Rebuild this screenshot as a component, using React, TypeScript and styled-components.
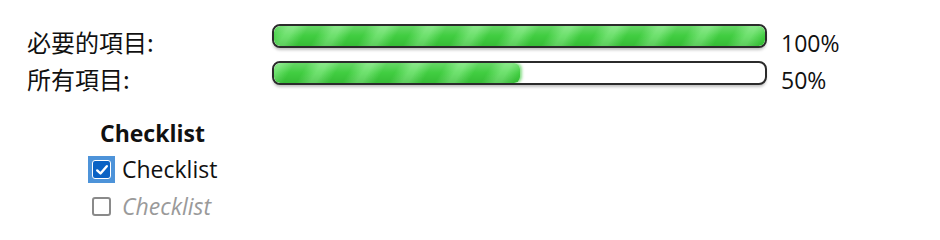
import React from 'react'
import styled, { createGlobalStyle } from 'styled-components'

const GlobalStyle = createGlobalStyle`
    body{
        margin:0;
        background:#fff;
        font-family:"Open Sans","Noto Sans CJK TC",sans-serif;
        color:#111;
    }
`

interface Progress{
    label:string
    value:number
}

const progress:Progress[] = [
    {label:'必要的項目:', value:100},
    {label:'所有項目:', value:50},
]

const Page = styled.div`
    padding:24px 0px 0px 27px;
    width:940px;
    height:240px;
    box-sizing:border-box;
`

const ProgressTable = styled.div`
    display:grid;
    grid-template-columns:245px 495px auto;
    grid-auto-rows:37px;
    align-items:start;
`

const Label = styled.div`
    font-size:24px;
    line-height:30px;
    padding-top:3px;
    font-family:"Noto Sans CJK TC","Open Sans",sans-serif;
    white-space:nowrap;
`

const Track = styled.div`
    position:relative;
    height:24px;
    box-sizing:border-box;
    border:2px solid #2b2b2b;
    border-radius:8px;
    background:#fff;
    overflow:hidden;
    box-shadow:0px 3px 3px -1px rgba(0,0,0,0.25);
`

const Fill = styled.div`
    height:100%;
    border-radius:6px;
    background:
        linear-gradient(180deg, rgba(255,255,255,0.2) 0%, rgba(255,255,255,0) 50%, rgba(0,90,0,0.15) 100%),
        repeating-linear-gradient(-60deg, #40cd40 0px, #40cd40 5px, #6de16d 17px, #6de16d 22px, #40cd40 34px, #40cd40 40px);
    box-shadow:2px 0px 3px rgba(60,200,60,0.6);
`

const Percent = styled.div`
    font-size:23px;
    line-height:30px;
    padding:4px 0px 0px 14px;
`

const Checklist = styled.div`
    display:flex;
    flex-direction:column;
    margin:20px 0px 0px 61px;
    gap:6px;
`

const Heading = styled.div`
    font-size:23px;
    font-weight:700;
    line-height:30px;
    padding-left:12px;
`

const Item = styled.label`
    display:flex;
    align-items:center;
    gap:7px;
    font-size:23px;
    line-height:31px;
`

const Box = styled.span<{checked?:boolean}>`
    display:flex;
    align-items:center;
    justify-content:center;
    width:27px;
    height:27px;
    box-sizing:border-box;
    background:${props=>props.checked ? '#4d93d9' : 'transparent'};
`

const Square = styled.span<{checked?:boolean}>`
    display:flex;
    align-items:center;
    justify-content:center;
    width:19px;
    height:19px;
    box-sizing:border-box;
    border-radius:3px;
    border:${props=>props.checked ? '1px solid #fff' : '2px solid #8a8a8a'};
    background:${props=>props.checked ? '#0a62c4' : '#fff'};
`

const ItemText = styled.span<{muted?:boolean}>`
    color:${props=>props.muted ? '#9a9a9a' : '#111'};
    font-style:${props=>props.muted ? 'italic' : 'normal'};
`

const Check = () => (
    <svg width="14" height="14" viewBox="0 0 14 14">
        <path d="M2.2 7.4 L5.5 10.5 L11.8 3.2" fill="none" stroke="#fff" strokeWidth="2.4" strokeLinecap="round" strokeLinejoin="round"/>
    </svg>
)

const App = () => {
    return (
        <Page>
            <GlobalStyle/>
            <ProgressTable>
                {progress.map((row,index)=>
                    <React.Fragment key={index}>
                        <Label>{row.label}</Label>
                        <Track>
                            <Fill style={{width:`${row.value}%`}}/>
                        </Track>
                        <Percent>{row.value}%</Percent>
                    </React.Fragment>
                )}
            </ProgressTable>
            <Checklist>
                <Heading>Checklist</Heading>
                <Item>
                    <Box checked><Square checked><Check/></Square></Box>
                    <ItemText>Checklist</ItemText>
                </Item>
                <Item>
                    <Box><Square/></Box>
                    <ItemText muted>Checklist</ItemText>
                </Item>
            </Checklist>
        </Page>
    )
}

export default App
